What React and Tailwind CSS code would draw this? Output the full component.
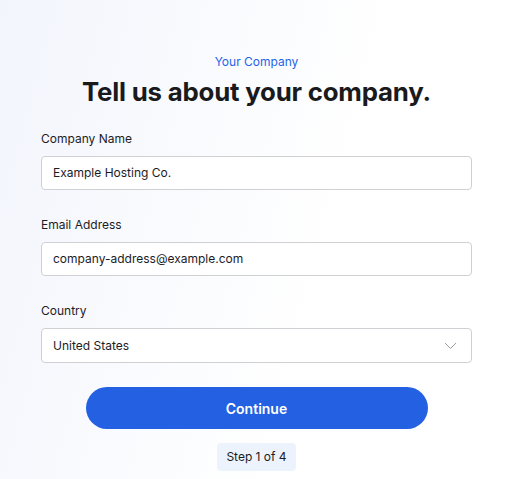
import React from "react";

const Field = ({ label, children }) => (
  <div className="flex flex-col">
    <label className="mb-[9px] text-[12px] leading-4 text-[#1c1c1f]">{label}</label>
    {children}
  </div>
);

const App = () => {
  return (
    <div
      className="min-h-[479px] w-full bg-[linear-gradient(105deg,#f2f5fc_0%,#ffffff_62%)] pt-[54px]"
      style={{ fontFamily: "Inter, 'Noto Sans', sans-serif" }}
    >
      <div className="mx-auto w-[431px]">
        <p className="text-center text-[12px] leading-4 text-[#2563eb]">Your Company</p>
        <h1 className="mt-[8px] text-center text-[25.8px] font-bold leading-7 tracking-[-0.2px] text-[#1a1a1d]">
          Tell us about your company.
        </h1>

        <div className="mt-[25px] flex flex-col gap-[27px]">
          <Field label="Company Name">
            <div className="flex h-[34px] items-center rounded-[4px] border border-[#cfd0d4] bg-white px-[11px] text-[12px] text-[#1c1c1f]">
              Example Hosting Co.
            </div>
          </Field>
          <Field label="Email Address">
            <div className="flex h-[34px] items-center rounded-[4px] border border-[#cfd0d4] bg-white px-[11px] text-[12px] text-[#1c1c1f]">
              company-address@example.com
            </div>
          </Field>
          <Field label="Country">
            <div className="flex h-[35px] items-center justify-between rounded-[4px] border border-[#cfd0d4] bg-white px-[11px] text-[12px] text-[#1c1c1f]">
              <span>United States</span>
              <svg width="13" height="8" viewBox="0 0 13 8" fill="none" className="mr-[3px]">
                <path d="M1 1l5.5 5.5L12 1" stroke="#9a9ca3" strokeWidth="1" />
              </svg>
            </div>
          </Field>
        </div>

        <div className="mt-[24px] flex flex-col items-center">
          <button className="h-[42px] w-[342px] rounded-full bg-[#2360e2] text-[14px] font-semibold text-white">
            Continue
          </button>
          <div className="mt-[14px] rounded-[4px] bg-[#edf3fd] px-[9px] py-[6px] text-[12px] leading-4 text-[#1c1c1f]">
            Step 1 of 4
          </div>
        </div>
      </div>
    </div>
  );
};

export default App;
